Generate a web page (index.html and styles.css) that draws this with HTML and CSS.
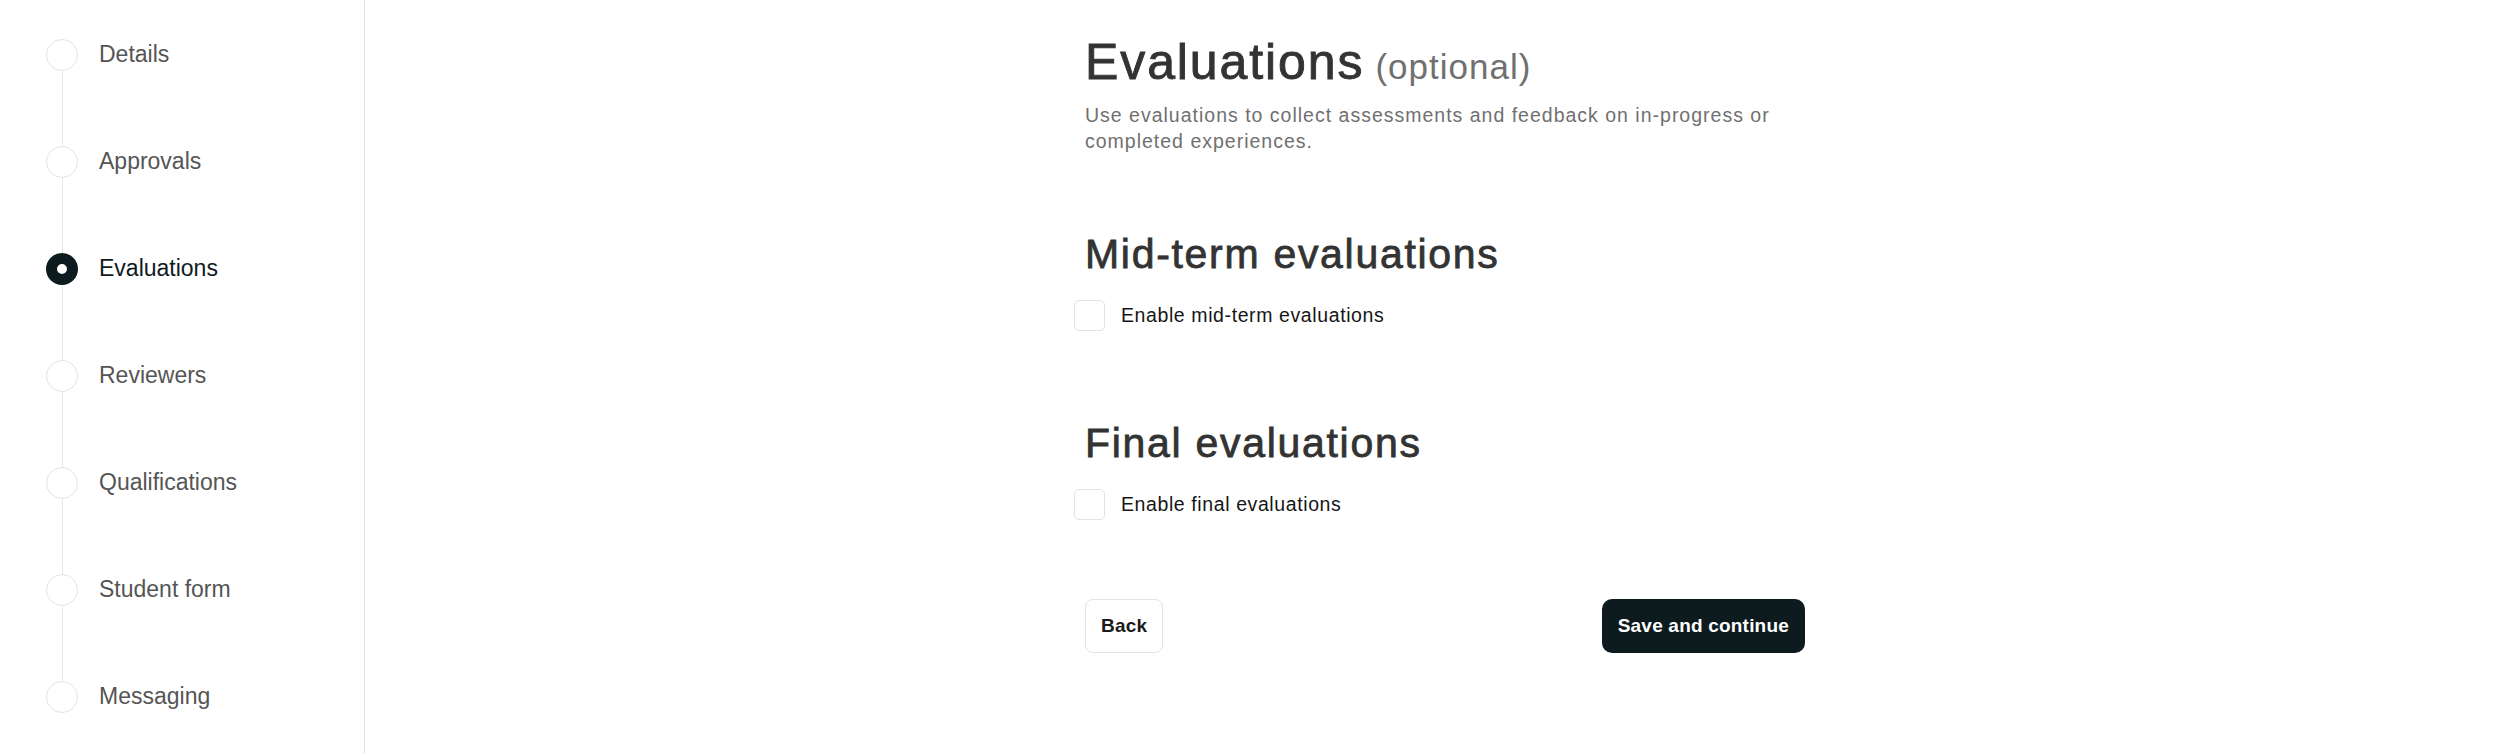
FILE: index.html
```html
<!DOCTYPE html>
<html lang="en">
<head>
<meta charset="utf-8">
<title>Evaluations</title>
<link rel="stylesheet" href="styles.css">
</head>
<body>
<div class="layout">
  <nav class="sidebar">
    <div class="step">
      <div class="marker"><span class="dot"></span><span class="connector"></span></div>
      <span class="step-label">Details</span>
    </div>
    <div class="step">
      <div class="marker"><span class="dot"></span><span class="connector"></span></div>
      <span class="step-label">Approvals</span>
    </div>
    <div class="step active">
      <div class="marker"><span class="dot"></span><span class="connector"></span></div>
      <span class="step-label">Evaluations</span>
    </div>
    <div class="step">
      <div class="marker"><span class="dot"></span><span class="connector"></span></div>
      <span class="step-label">Reviewers</span>
    </div>
    <div class="step">
      <div class="marker"><span class="dot"></span><span class="connector"></span></div>
      <span class="step-label">Qualifications</span>
    </div>
    <div class="step">
      <div class="marker"><span class="dot"></span><span class="connector"></span></div>
      <span class="step-label">Student form</span>
    </div>
    <div class="step last">
      <div class="marker"><span class="dot"></span></div>
      <span class="step-label">Messaging</span>
    </div>
  </nav>
  <main class="main">
    <div class="content">
      <h1 class="title">Evaluations<span class="optional">(optional)</span></h1>
      <p class="description">Use evaluations to collect assessments and feedback on in-progress or completed experiences.</p>

      <section class="section">
        <h2 class="section-title">Mid-term evaluations</h2>
        <label class="check-row">
          <span class="checkbox"></span>
          <span class="check-label">Enable mid-term evaluations</span>
        </label>
      </section>

      <section class="section">
        <h2 class="section-title">Final evaluations</h2>
        <label class="check-row">
          <span class="checkbox"></span>
          <span class="check-label">Enable final evaluations</span>
        </label>
      </section>

      <div class="actions">
        <button class="btn btn-back" type="button">Back</button>
        <button class="btn btn-primary" type="button">Save and continue</button>
      </div>
    </div>
  </main>
</div>
</body>
</html>
```

FILE: styles.css
```css
* {
  box-sizing: border-box;
}

html, body {
  margin: 0;
  padding: 0;
  background: #ffffff;
}

body {
  font-family: "Liberation Sans", Arial, Helvetica, sans-serif;
  color: #333333;
}

.layout {
  display: flex;
  min-height: 100vh;
}

/* Sidebar stepper */
.sidebar {
  width: 365px;
  flex: 0 0 365px;
  border-right: 1px solid #e1e1e1;
  padding: 39px 0 0 46px;
  display: flex;
  flex-direction: column;
}

.step {
  display: flex;
  align-items: flex-start;
  gap: 21px;
}

.marker {
  width: 32px;
  display: flex;
  flex-direction: column;
  align-items: center;
}

.dot {
  display: block;
  width: 32px;
  height: 32px;
  border-radius: 50%;
  border: 1.5px solid #e4e4e4;
  background: #ffffff;
}

.connector {
  display: block;
  width: 1px;
  height: 75px;
  background: #e6e6e6;
}

.step-label {
  font-size: 23px;
  line-height: 30px;
  color: #555555;
}

.step.active .dot {
  border: 11px solid #0d1a1e;
  background: #ffffff;
}

.step.active .step-label {
  color: #0d1a1e;
}

/* Main content */
.main {
  flex: 1;
  padding-left: 15px;
}

.content {
  width: 720px;
  margin: 0 auto;
  padding-top: 32px;
}

.title {
  margin: 0;
  font-size: 50px;
  line-height: 60px;
  font-weight: 400;
  letter-spacing: 1.9px;
  -webkit-text-stroke: 0.9px #333333;
  color: #333333;
}

.optional {
  margin-left: 11px;
  font-size: 35px;
  line-height: 1;
  font-weight: 400;
  letter-spacing: 1px;
  -webkit-text-stroke: 0;
  color: #707070;
}

.description {
  margin: 10px 0 0;
  font-size: 19.5px;
  line-height: 26px;
  letter-spacing: 1px;
  color: #707070;
}

.section {
  margin-top: 75px;
}

.section + .section {
  margin-top: 87px;
}

.section-title {
  margin: 0;
  font-size: 41px;
  line-height: 50px;
  font-weight: 400;
  letter-spacing: 1.7px;
  -webkit-text-stroke: 0.8px #333333;
  color: #333333;
}

.check-row {
  display: flex;
  align-items: center;
  margin-top: 21px;
  margin-left: -11px;
  cursor: pointer;
}

.checkbox {
  display: block;
  width: 31px;
  height: 31px;
  border: 1.5px solid #e2e2e2;
  border-radius: 5px;
  background: #ffffff;
}

.check-label {
  margin-left: 16px;
  font-size: 19.5px;
  letter-spacing: 0.6px;
  color: #161616;
}

.actions {
  display: flex;
  justify-content: space-between;
  margin-top: 79px;
}

.btn {
  height: 54px;
  font-family: "Liberation Sans", Arial, Helvetica, sans-serif;
  font-size: 19px;
  font-weight: 700;
  letter-spacing: 0.2px;
  cursor: pointer;
}

.btn-back {
  padding: 0 15px;
  background: #ffffff;
  color: #1a1a1a;
  border: 1px solid #e3e3e3;
  border-radius: 8px;
}

.btn-primary {
  padding: 0 16px;
  background: #0d1a1e;
  color: #ffffff;
  border: none;
  border-radius: 10px;
}
```
